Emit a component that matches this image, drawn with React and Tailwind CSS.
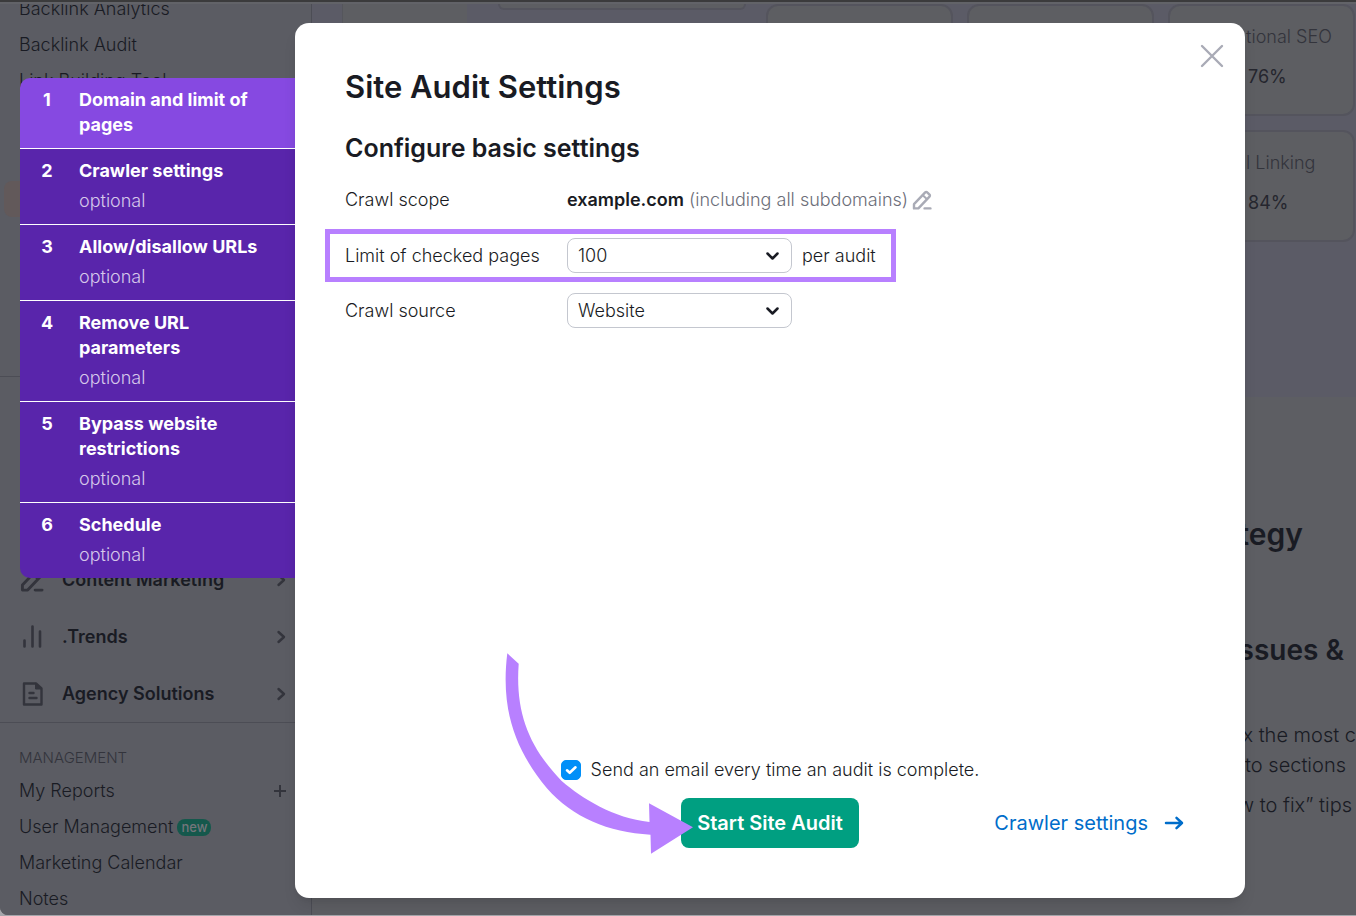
import { useState } from "react";

const steps = [
  { title: "Domain and limit of pages" },
  { title: "Crawler settings", optional: true },
  { title: "Allow/disallow URLs", optional: true },
  { title: "Remove URL parameters", optional: true },
  { title: "Bypass website restrictions", optional: true },
  { title: "Schedule", optional: true },
];

const cards = [
  {},
  {},
  { title: "International SEO", score: "76%" },
  {},
  {},
  { title: "Internal Linking", score: "84%" },
];

function PencilIcon({ className }) {
  return (
    <svg viewBox="0 0 20 20" className={className} fill="none" stroke="currentColor" strokeWidth="2.4" strokeLinejoin="round" strokeLinecap="round" aria-hidden="true">
      <path d="M2 18.4v-4.2L13.2 2.4a1.4 1.4 0 0 1 2 0l2.3 2.2a1.4 1.4 0 0 1 0 2L6.4 18.4z" />
      <path d="M10.8 5.2l4 3.8" strokeWidth="2" />
      <path d="M12.6 18.4h5.8" />
    </svg>
  );
}

function BarsIcon({ className }) {
  return (
    <svg viewBox="0 0 24 24" className={className} fill="none" stroke="currentColor" strokeWidth="2.6" strokeLinecap="round" aria-hidden="true">
      <path d="M4.500 15.500v6M12.500 1.500v20M20 6.500v15" />
    </svg>
  );
}

function DocumentIcon({ className }) {
  return (
    <svg viewBox="0 0 24 24" className={className} fill="none" stroke="currentColor" strokeWidth="2.4" strokeLinejoin="round" strokeLinecap="round" aria-hidden="true">
      <path d="M4 1.500h12l5.500 5v16H4z" />
      <path d="M15.500 1.500v5.500h6z" fill="currentColor" strokeWidth="1" />
      <path d="M9.500 11h4M9.500 16h7" />
    </svg>
  );
}

function ChevronRight() {
  return (
    <svg viewBox="0 0 10 14" className="h-3.5 w-2.5 text-[#33343c]" fill="none" stroke="currentColor" strokeWidth="2.4" strokeLinecap="round" strokeLinejoin="round" aria-hidden="true">
      <path d="M2.500 2L8 7l-5.500 5" />
    </svg>
  );
}

function NavLink({ children }) {
  return (
    <a href="#" className="flex h-9 items-center px-[19px] text-lg font-light text-[#191b23]">
      {children}
    </a>
  );
}

function NavGroup({ icon, children }) {
  return (
    <a href="#" className="flex h-[57px] items-center pr-[25px] pl-5 text-lg font-semibold text-[#191b23]">
      <span className="w-[42px] text-[#33343c]">{icon}</span>
      <span className="flex-1">{children}</span>
      <ChevronRight />
    </a>
  );
}

function Sidebar() {
  return (
    <nav className="w-[312px] shrink-0 border-r border-[#4c4d55] bg-[#5b5c63]">
      <div className="-mt-[13px] h-[386px] border-b border-[#4c4d55]">
        <NavLink>Backlink Analytics</NavLink>
        <NavLink>Backlink Audit</NavLink>
        <NavLink>Link Building Tool</NavLink>
        <div className="mx-1 mt-[82px] h-9 rounded-lg bg-[#62595a]" />
      </div>
      <div className="border-b border-[#4c4d55] pt-[174px]">
        <NavGroup icon={<PencilIcon className="size-6" />}>Content Marketing</NavGroup>
        <NavGroup icon={<BarsIcon className="size-6" />}>.Trends</NavGroup>
        <NavGroup icon={<DocumentIcon className="size-6" />}>Agency Solutions</NavGroup>
      </div>
      <div className="pt-[23px]">
        <p className="px-[19px] pb-[3px] text-[15px] leading-6 font-light text-[#33343c]">MANAGEMENT</p>
        <div className="flex items-center justify-between pr-[25px]">
          <NavLink>My Reports</NavLink>
          <svg viewBox="0 0 12 12" className="size-3 text-[#33343c]" stroke="currentColor" strokeWidth="2" aria-hidden="true">
            <path d="M6 0v12M0 6h12" />
          </svg>
        </div>
        <NavLink>
          User Management
          <span className="ml-1 rounded-lg bg-[#15584c] px-1 text-[13px] leading-[17px] font-medium text-[#74757b]">new</span>
        </NavLink>
        <NavLink>Marketing Calendar</NavLink>
        <NavLink>Notes</NavLink>
      </div>
    </nav>
  );
}

function Report() {
  return (
    <main className="flex min-w-0 flex-1 flex-col bg-[#5d5e63]">
      <div className="flex h-[393px] bg-[#5b5b66] pl-[30px]">
        <div className="w-[125px] shrink-0 border-l border-[#55565c] bg-[#5d5e62]" />
        <div className="mr-5 ml-[31px] h-1.5 min-w-0 flex-1 rounded-b-lg border-2 border-t-0 border-[#54545d] bg-[#5d5e62]" />
        <div className="grid shrink-0 grid-cols-3 content-start gap-3.5 pr-px">
          {cards.map((card, i) => (
            <section key={i} className="h-[112px] w-[187px] rounded-xl border-2 border-[#54545d] bg-[#5d5e62] px-[18px] pt-[17px]">
              <h3 className="text-lg leading-7 font-light whitespace-nowrap text-[#33343c]">{card.title}</h3>
              <p className="mt-3 pl-[60px] text-lg leading-7 text-[#25262e]">{card.score}</p>
            </section>
          ))}
        </div>
      </div>
      <div className="pt-[117px] text-right whitespace-nowrap text-[#191b23]">
        <h2 className="pr-[53px] text-3xl leading-10 font-semibold">Strategy</h2>
        <h3 className="mt-[76px] pr-3 text-[28px] leading-10 font-semibold">issues &amp;</h3>
        <div className="mt-[50px] text-xl leading-[30px] font-light">
          <p>fix the most c</p>
          <p className="pr-2.5">into sections</p>
          <p className="mt-2.5 pr-1">how to fix” tips</p>
        </div>
      </div>
    </main>
  );
}

function Steps() {
  const [active, setActive] = useState(0);

  return (
    <ol className="mt-[55px] w-[275px] shrink-0 divide-y divide-white self-start overflow-hidden rounded-l-[10px] text-lg text-white">
      {steps.map((step, i) => (
        <li key={step.title}>
          <button
            type="button"
            onClick={() => setActive(i)}
            className={
              i === active
                ? "flex w-full bg-[#8649e1] pt-[9px] pb-[11px] pl-5 text-left"
                : "flex w-full bg-[#5925ab] pt-[9px] pb-[11px] pl-5 text-left"
            }
          >
            <span className="mr-[25px] w-3.5 text-center leading-[25px] font-bold">{i + 1}</span>
            <span className="max-w-[180px] leading-[25px]">
              <span className="block font-bold">{step.title}</span>
              {step.optional && <span className="mt-[5px] block font-light text-[#d6c8ea]">optional</span>}
            </span>
          </button>
        </li>
      ))}
    </ol>
  );
}

function Select({ id, options }) {
  return (
    <div className="relative w-[225px]">
      <select id={id} className="h-[35px] w-full appearance-none rounded-lg border border-[#c4c7cf] bg-white px-2.5 text-lg leading-none font-light text-[#191b23]">
        {options.map((option) => (
          <option key={option}>{option}</option>
        ))}
      </select>
      <svg viewBox="0 0 14 10" className="pointer-events-none absolute top-[13px] right-3 h-2.5 w-3.5 text-[#191b23]" fill="none" stroke="currentColor" strokeWidth="2.500" strokeLinecap="round" strokeLinejoin="round" aria-hidden="true">
        <path d="M1.500 2.500l5 5 5-5" />
      </svg>
    </div>
  );
}

// Curved pointer that ends on the submit button
function PointerArrow() {
  return (
    <svg viewBox="0 0 192 202" className="pointer-events-none absolute -bottom-1.5 -left-[178px] h-[202px] w-[192px]" fill="#b880ff" aria-hidden="true">
      <path d="M4.300 1.300C-3 60 14 100 43.700 136C70 166 105 180 147.500 182.700L148 201.700L190 175.300L146 151.300L146.500 170C110 166 80 147 58.700 129C27 96 12 62 15.700 11.700Z" />
    </svg>
  );
}

function SettingsPanel() {
  return (
    <section role="dialog" aria-labelledby="dialog-title" className="relative flex min-w-0 flex-1 flex-col rounded-[14px] bg-white px-[50px] pt-11 pb-[50px] text-lg font-light text-[#191b23] shadow-lg">
      <button type="button" aria-label="Close" className="absolute top-[21px] right-[21px] text-[#a9abb6]">
        <svg viewBox="0 0 24 24" className="size-6" stroke="currentColor" strokeWidth="2.400" strokeLinecap="round" aria-hidden="true">
          <path d="M2 2l20 20M22 2L2 22" />
        </svg>
      </button>

      <h1 id="dialog-title" className="text-[31px] leading-10 font-semibold">Site Audit Settings</h1>
      <h2 className="mt-[25px] text-[25px] leading-8 font-semibold">Configure basic settings</h2>

      <div className="mt-[22px] flex items-center leading-7">
        <span className="w-[222px] shrink-0">Crawl scope</span>
        <span className="text-[#6c6e79]">
          <b className="font-semibold text-[#191b23]">example.com</b> (including all subdomains)
        </span>
        <button type="button" aria-label="Edit crawl scope" className="ml-1 text-[#a9abb6]">
          <PencilIcon className="size-5" />
        </button>
      </div>

      <div className="mt-[15px] -ml-5 flex items-center self-start border-[5px] border-[#b880ff] px-[15px] py-1">
        <label htmlFor="limit" className="w-[222px]">Limit of checked pages</label>
        <Select id="limit" options={["100", "500", "1,000"]} />
        <span className="ml-2.5">per audit</span>
      </div>

      <div className="mt-[11px] flex items-center">
        <label htmlFor="source" className="w-[222px]">Crawl source</label>
        <Select id="source" options={["Website", "Sitemap"]} />
      </div>

      <footer className="mt-auto">
        <label className="flex items-center justify-center gap-2.5">
          <span className="relative size-5">
            <input type="checkbox" defaultChecked className="peer block size-5 appearance-none rounded-[5px] border border-[#008ff8] checked:bg-[#008ff8]" />
            <svg viewBox="0 0 20 20" className="pointer-events-none absolute inset-0 size-5" fill="none" stroke="white" strokeWidth="2.600" strokeLinecap="round" strokeLinejoin="round" aria-hidden="true">
              <path d="M6 10.300l2.700 2.500L14.500 7.300" />
            </svg>
          </span>
          Send an email every time an audit is complete.
        </label>
        <div className="mt-3.5 grid grid-cols-[1fr_auto_1fr] items-center">
          <div className="relative col-start-2">
            <button type="button" className="h-[50px] rounded-lg bg-[#009f81] px-4 text-xl font-semibold text-white">
              Start Site Audit
            </button>
            <PointerArrow />
          </div>
          <a href="#" className="mr-[11px] flex items-center gap-4 justify-self-end text-xl font-normal text-[#006dca]">
            Crawler settings
            <svg viewBox="0 0 20 14" className="h-3.5 w-5" fill="none" stroke="currentColor" strokeWidth="2.500" strokeLinecap="round" strokeLinejoin="round" aria-hidden="true">
              <path d="M2 7h16M12.500 1.800L18 7l-5.500 5.200" />
            </svg>
          </a>
        </div>
      </footer>
    </section>
  );
}

export default function App() {
  return (
    <div className="relative h-screen overflow-hidden bg-[#a5a6ab] pb-px font-['Inter',sans-serif]">
      <div className="flex h-full flex-col overflow-hidden rounded-bl-lg bg-[#5d5e63]">
        <div className="h-1 shrink-0 border-t-2 border-[#3b3b3c] bg-[#626368]" />
        <div className="flex min-h-0 flex-1 overflow-hidden">
          <Sidebar />
          <Report />
        </div>
      </div>
      <div className="absolute inset-0 flex pt-[23px] pr-[111px] pb-[18px] pl-5">
        <Steps />
        <SettingsPanel />
      </div>
    </div>
  );
}
